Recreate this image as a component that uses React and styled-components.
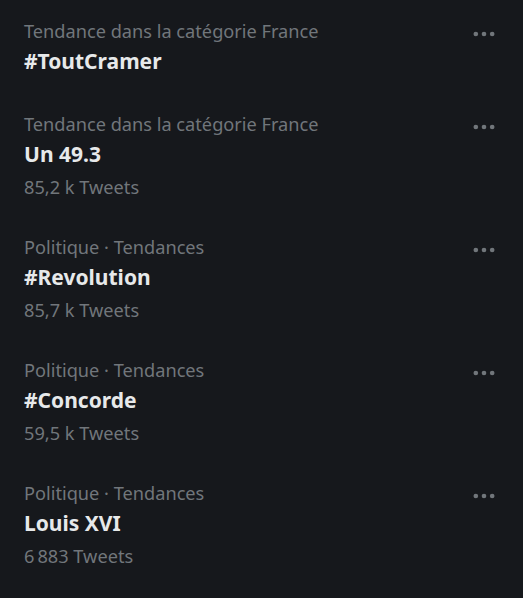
import styled, { createGlobalStyle } from "styled-components";

const GlobalStyle = createGlobalStyle`
  html, body {
    margin: 0;
    padding: 0;
    background: #16181c;
  }
  body {
    font-family: "Noto Sans", "Open Sans", sans-serif;
  }
`;

const trends = [
  { category: "Tendance dans la catégorie France", title: "#ToutCramer" },
  { category: "Tendance dans la catégorie France", title: "Un 49.3", count: "85,2 k Tweets" },
  { category: "Politique · Tendances", title: "#Revolution", count: "85,7 k Tweets" },
  { category: "Politique · Tendances", title: "#Concorde", count: "59,5 k Tweets" },
  { category: "Politique · Tendances", title: "Louis XVI", count: "6\u202f883 Tweets" },
];

const MoreIcon = () => (
  <svg viewBox="0 0 24 24" width="28" height="28" fill="currentColor">
    <circle cx="5" cy="12" r="2" />
    <circle cx="12" cy="12" r="2" />
    <circle cx="19" cy="12" r="2" />
  </svg>
);

const App = () => {
  return (
    <Panel>
      <GlobalStyle />
      {trends.map(({ category, title, count }, i) => (
        <Trend key={i}>
          <Info>
            <Category>{category}</Category>
            <Title>{title}</Title>
            {count && <Count>{count}</Count>}
          </Info>
          <More>
            <MoreIcon />
          </More>
        </Trend>
      ))}
    </Panel>
  );
};

export default App;

const Panel = styled.div`
  width: 523px;
  height: 598px;
  background: #16181c;
  overflow: hidden;
`;

const Trend = styled.div`
  display: flex;
  justify-content: space-between;
  align-items: flex-start;
  padding: 19px 24px 17px;
`;

const Info = styled.div`
  display: flex;
  flex-direction: column;
`;

const Category = styled.div`
  color: #71767b;
  font-size: 18.2px;
  line-height: 24px;
`;

const Title = styled.div`
  color: #e7e9ea;
  font-size: 21px;
  font-weight: 700;
  line-height: 30px;
  padding-top: 3px;
`;

const Count = styled.div`
  color: #71767b;
  font-size: 18.2px;
  line-height: 24px;
  margin-top: 6px;
`;

const More = styled.div`
  color: #71767b;
  display: flex;
  margin-top: 1px;
  margin-right: 1px;
`;
